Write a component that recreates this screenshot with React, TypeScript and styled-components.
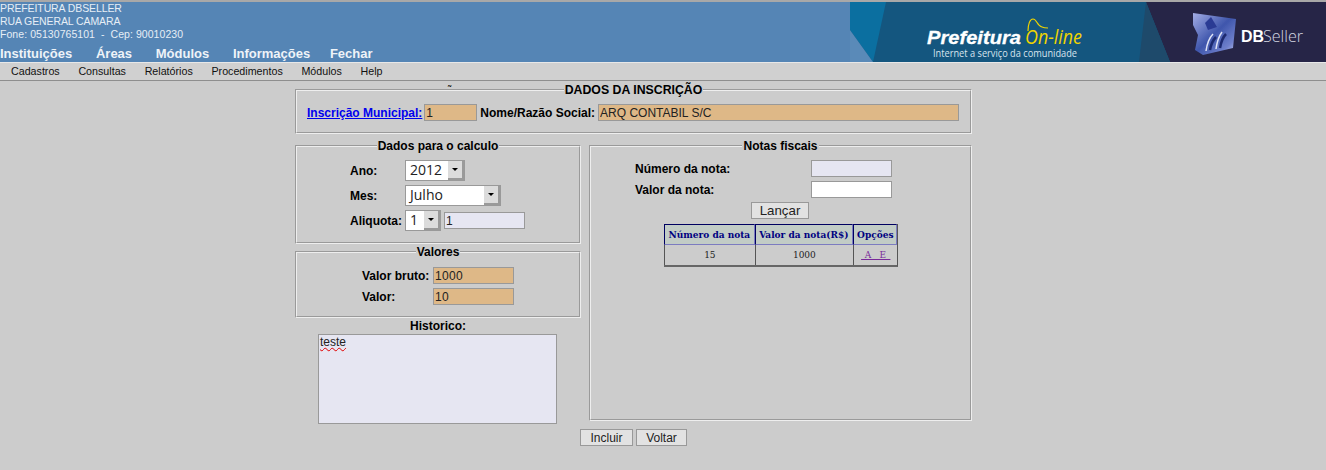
import styled, { createGlobalStyle } from "styled-components";

const GlobalStyle = createGlobalStyle`
  html, body {
    margin: 0;
    padding: 0;
    background: #cccccc;
    font-family: "Liberation Sans", Arial, sans-serif;
    font-size: 12px;
    color: #000;
  }
`;

const Header = styled.header`
  height: 60px;
  border-top: 2px solid #a8a8a8;
  border-bottom: 1px solid #e8e8e8;
  background: #5585b5;
  display: flex;
  justify-content: space-between;
`;

const HeaderLeft = styled.div`
  display: flex;
  flex-direction: column;
  color: #e6eef6;
`;

const InfoLine = styled.div<{ $spacing?: number }>`
  font-size: 10.5px;
  line-height: 13px;
  white-space: pre;
  letter-spacing: ${(p) => p.$spacing ?? 0}px;
`;

const InfoBlock = styled.div`
  height: 44px;
`;

const TopNav = styled.nav`
  display: flex;
  gap: 23.7px;
`;

const TopNavItem = styled.a`
  font-size: 13px;
  font-weight: bold;
  line-height: 15px;
  color: #eef3f8;

  &:last-child {
    margin-left: -4px;
  }
`;

const Banner = styled.svg`
  display: block;
  width: 476px;
  height: 60px;
`;

const MenuBar = styled.nav`
  height: 18px;
  box-sizing: border-box;
  padding: 0 0 2px 11px;
  display: flex;
  gap: 18.7px;
  align-items: center;
  background: #d0d0d0;
  border-bottom: 1px solid #8e8e8e;
`;

const MenuItem = styled.a`
  font-size: 10.7px;
  color: #111;
`;

const Tilde = styled.div`
  height: 2px;
  line-height: 17px;
  padding-left: 448px;
  font-size: 10px;
`;

const Content = styled.main`
  width: 677px;
  margin-left: 295px;
`;

const Group = styled.fieldset<{ $height: number; $top?: number }>`
  margin: ${(p) => p.$top ?? 0}px 0 0;
  padding: 0;
  height: ${(p) => p.$height}px;
  box-sizing: border-box;
  min-width: 0;
  border: 2px groove #eeeeee;
`;

const GroupTitle = styled.legend<{ $big?: boolean }>`
  margin: 0 auto;
  padding: 0 1px;
  font-weight: bold;
  font-size: ${(p) => (p.$big ? 12.3 : 12)}px;
  line-height: 14px;
`;

const InscricaoRow = styled.div`
  display: flex;
  align-items: center;
  gap: 3px;
  padding: 7px 0 0 10px;
`;

const InscricaoLink = styled.a`
  color: #0000ee;
  font-weight: bold;
  text-decoration: underline;
  margin-right: -1px;
`;

const Label = styled.label<{ $width?: number }>`
  font-weight: bold;
  width: ${(p) => (p.$width ? `${p.$width}px` : "auto")};
  flex: none;
`;

const Input = styled.input<{ $tone?: "tan" | "lilac" | "white"; $width: number; $digits?: boolean }>`
  box-sizing: border-box;
  width: ${(p) => p.$width}px;
  height: 17px;
  padding: 0 1px;
  margin: 0;
  border: 1px solid #999;
  outline: none;
  font: 12px "Liberation Sans", Arial, sans-serif;
  letter-spacing: ${(p) => (p.$digits ? 0.33 : 0)}px;
  color: #222;
  background: ${(p) =>
    p.$tone === "tan" ? "#deb887" : p.$tone === "lilac" ? "#e6e6f2" : "#fff"};
`;

const Columns = styled.div`
  display: flex;
  gap: 8px;
  margin-top: 5px;
`;

const LeftColumn = styled.div`
  width: 286px;
  display: flex;
  flex-direction: column;
`;

const RightColumn = styled.div`
  width: 383px;
`;

const FieldRow = styled.div<{ $left: number; $gap?: number }>`
  display: flex;
  align-items: center;
  padding-left: ${(p) => p.$left}px;
  margin-top: ${(p) => p.$gap ?? 4}px;
`;

const SelectBox = styled.div<{ $width: number }>`
  box-sizing: border-box;
  width: ${(p) => p.$width}px;
  height: 21px;
  display: flex;
  justify-content: space-between;
  align-items: stretch;
  background: #fff;
  border: 1px solid #999;
  font: 14px "Open Sans", sans-serif;
  color: #222;
`;

const SelectValue = styled.span`
  padding-left: 4px;
  line-height: 18px;
`;

const SelectArrow = styled.span`
  width: 16px;
  background: #dcdcdc;
  border-right: 2px solid #9a9a9a;
  border-bottom: 2px solid #9a9a9a;
  box-sizing: border-box;
  display: flex;
  align-items: center;
  justify-content: center;

  &::before {
    content: "";
    border: 3px solid transparent;
    border-top: 3px solid #000;
    border-bottom: 0;
  }
`;

const SideInput = styled.div`
  margin-left: 3px;
  display: flex;
`;

const HistoricoTitle = styled.div`
  font-weight: bold;
  text-align: center;
  line-height: 16px;
`;

const TextArea = styled.div`
  box-sizing: border-box;
  width: 239px;
  height: 90px;
  margin-left: 23px;
  padding: 1px;
  background: #e6e6f2;
  border: 1px solid #999;
  color: #222;
  line-height: 13px;
`;

const Misspelled = styled.span`
  text-decoration: underline wavy #e00000 1px;
`;

const Button = styled.button<{ $width: number; $size?: number }>`
  box-sizing: border-box;
  width: ${(p) => p.$width}px;
  height: 17px;
  padding: 0;
  margin: 0;
  background: #e2e2e2;
  border: 1px solid #999;
  font: ${(p) => p.$size ?? 12}px "Liberation Sans", Arial, sans-serif;
  color: #222;
`;

const CenterRow = styled.div`
  display: flex;
  padding-left: 160px;
  margin-top: 4px;
`;

const NotasTable = styled.table`
  border-collapse: separate;
  border-spacing: 0;
  margin: 5px 0 0 73px;
  border-right: 1px solid #555;
  border-bottom: 2px solid #666;
  font-family: "DejaVu Serif", serif;
  font-size: 9px;
`;

const HeadCell = styled.th`
  height: 19px;
  padding: 0 3px;
  background: #c2ccc6;
  color: #000080;
  font-weight: bold;
  white-space: nowrap;
  border: 1px solid;
  border-color: #000060 #7c7cc0 #7c7cc0 #000060;

  &:nth-child(-n + 2) {
    padding: 0 3.5px;
  }
`;

const BodyCell = styled.td`
  height: 20px;
  padding: 0;
  text-align: center;
  color: #222;
  border-left: 1px solid #555;
`;

const OptionLink = styled.a`
  color: #7a2a9a;
  text-decoration: underline;
  white-space: pre;
  letter-spacing: 0.8px;
`;

const Actions = styled.div`
  display: flex;
  gap: 3px;
  padding-left: 285px;
  margin-top: 5px;
`;

function HeaderBanner() {
  return (
    <Banner viewBox="0 0 476 60">
      <defs>
        <linearGradient id="cube" x1="0" y1="0" x2="1" y2="1">
          <stop offset="0" stopColor="#a4aee6" />
          <stop offset="0.5" stopColor="#3f56ac" />
          <stop offset="0.8" stopColor="#6f80cc" />
          <stop offset="1" stopColor="#c3cbef" />
        </linearGradient>
        <filter id="soft">
          <feGaussianBlur stdDeviation="0.5" />
        </filter>
      </defs>
      <rect width="476" height="60" fill="#14567f" />
      <polygon points="0,0 36,0 23,60 0,28" fill="#0b6fa0" />
      <polygon points="0,28 23,60 0,60" fill="#5a8ab8" />
      <polygon points="296,0 476,0 476,60 320,60" fill="#262547" />
      <polygon points="296,0 320,60 289,60" fill="#1e4a6b" />
      <text x="77" y="42" fontFamily="Liberation Sans" fontSize="19" fontWeight="bold" fontStyle="italic" fill="#fff" stroke="#fff" strokeWidth="0.3" textLength="94" lengthAdjust="spacingAndGlyphs">
        Prefeitura
      </text>
      <text x="175" y="42" fontFamily="Open Sans" fontSize="20" fontStyle="italic" fill="#f0d400" textLength="57" lengthAdjust="spacingAndGlyphs">
        On-line
      </text>
      <path d="M178 29 C178 22 180 17 183 17 C187 17 187 24 192 25 C194 26 196 26 198 26" fill="none" stroke="#f0d400" strokeWidth="1.2" />
      <text x="83" y="55" fontFamily="Open Sans" fontSize="10" fill="#d8e4ee" textLength="144" lengthAdjust="spacingAndGlyphs">
        Internet a serviço da comunidade
      </text>
      <g filter="url(#soft)">
        <polygon points="343,11 386,17 383,46 353,53 345,48 348,33 343,23" fill="url(#cube)" />
        <polygon points="355,21 361,15 367,25 358,28" fill="#2c3a94" />
        <path d="M360 48 C361 42 363 38 366 35 M370 46 C371 40 373 35 376 32" stroke="#1f2a70" strokeWidth="2.5" fill="none" />
        <path d="M356 49 C357 42 359 36 363 32 M366 47 C367 40 369 34 372 30" stroke="#dfe3f6" strokeWidth="1.5" fill="none" />
      </g>
      <text x="391" y="40" fontFamily="Liberation Sans" fontSize="16" fontWeight="bold" fill="#fff" textLength="23" lengthAdjust="spacingAndGlyphs">
        DB
      </text>
      <text x="413" y="40" fontFamily="Open Sans" fontSize="16" fontWeight="300" fill="#d4d6e2" textLength="40" lengthAdjust="spacingAndGlyphs">
        Seller
      </text>
    </Banner>
  );
}

function App() {
  return (
    <>
      <GlobalStyle />
      <Header>
        <HeaderLeft>
          <InfoBlock>
            <InfoLine $spacing={-0.1}>PREFEITURA DBSELLER</InfoLine>
            <InfoLine $spacing={-0.1}>RUA GENERAL CAMARA</InfoLine>
            <InfoLine $spacing={0.06}>{"Fone: 05130765101  -  Cep: 90010230"}</InfoLine>
          </InfoBlock>
          <TopNav>
            {["Instituições", "Áreas", "Módulos", "Informações", "Fechar"].map((item) => (
              <TopNavItem key={item}>{item}</TopNavItem>
            ))}
          </TopNav>
        </HeaderLeft>
        <HeaderBanner />
      </Header>
      <MenuBar>
        {["Cadastros", "Consultas", "Relatórios", "Procedimentos", "Módulos", "Help"].map((item) => (
          <MenuItem key={item}>{item}</MenuItem>
        ))}
      </MenuBar>
      <Tilde>˜</Tilde>
      <Content>
        <Group $height={51}>
          <GroupTitle $big>DADOS DA INSCRIÇÃO</GroupTitle>
          <InscricaoRow>
            <InscricaoLink href="#">Inscrição Municipal:</InscricaoLink>
            <Input $tone="tan" $width={53} defaultValue="1" />
            <Label>Nome/Razão Social:</Label>
            <Input $tone="tan" $width={361} defaultValue="ARQ CONTABIL S/C" />
          </InscricaoRow>
        </Group>
        <Columns>
          <LeftColumn>
            <Group $height={105}>
              <GroupTitle>Dados para o calculo</GroupTitle>
              <FieldRow $left={53} $gap={7}>
                <Label $width={55}>Ano:</Label>
                <SelectBox $width={60}>
                  <SelectValue>2012</SelectValue>
                  <SelectArrow />
                </SelectBox>
              </FieldRow>
              <FieldRow $left={53}>
                <Label $width={55}>Mes:</Label>
                <SelectBox $width={96}>
                  <SelectValue>Julho</SelectValue>
                  <SelectArrow />
                </SelectBox>
              </FieldRow>
              <FieldRow $left={53}>
                <Label $width={55}>Aliquota:</Label>
                <SelectBox $width={36}>
                  <SelectValue>1</SelectValue>
                  <SelectArrow />
                </SelectBox>
                <SideInput>
                  <Input $tone="lilac" $width={81} defaultValue="1" />
                </SideInput>
              </FieldRow>
            </Group>
            <Group $height={73} $top={1}>
              <GroupTitle>Valores</GroupTitle>
              <FieldRow $left={65} $gap={8}>
                <Label $width={71}>Valor bruto:</Label>
                <Input $tone="tan" $width={81} $digits defaultValue="1000" />
              </FieldRow>
              <FieldRow $left={65}>
                <Label $width={71}>Valor:</Label>
                <Input $tone="tan" $width={81} $digits defaultValue="10" />
              </FieldRow>
            </Group>
            <HistoricoTitle>Historico:</HistoricoTitle>
            <TextArea>
              <Misspelled>teste</Misspelled>
            </TextArea>
          </LeftColumn>
          <RightColumn>
            <Group $height={282}>
              <GroupTitle>Notas fiscais</GroupTitle>
              <FieldRow $left={44} $gap={7}>
                <Label $width={176}>Número da nota:</Label>
                <Input $tone="lilac" $width={81} />
              </FieldRow>
              <FieldRow $left={44}>
                <Label $width={176}>Valor da nota:</Label>
                <Input $width={81} />
              </FieldRow>
              <CenterRow>
                <Button $width={58} $size={13.3}>Lançar</Button>
              </CenterRow>
              <NotasTable>
                <thead>
                  <tr>
                    <HeadCell>Número da nota</HeadCell>
                    <HeadCell>Valor da nota(R$)</HeadCell>
                    <HeadCell>Opções</HeadCell>
                  </tr>
                </thead>
                <tbody>
                  <tr>
                    <BodyCell>15</BodyCell>
                    <BodyCell>1000</BodyCell>
                    <BodyCell>
                      <OptionLink href="#">{" A  E "}</OptionLink>
                    </BodyCell>
                  </tr>
                </tbody>
              </NotasTable>
            </Group>
          </RightColumn>
        </Columns>
        <Actions>
          <Button $width={53}>Incluir</Button>
          <Button $width={51}>Voltar</Button>
        </Actions>
      </Content>
    </>
  );
}

export default App;
